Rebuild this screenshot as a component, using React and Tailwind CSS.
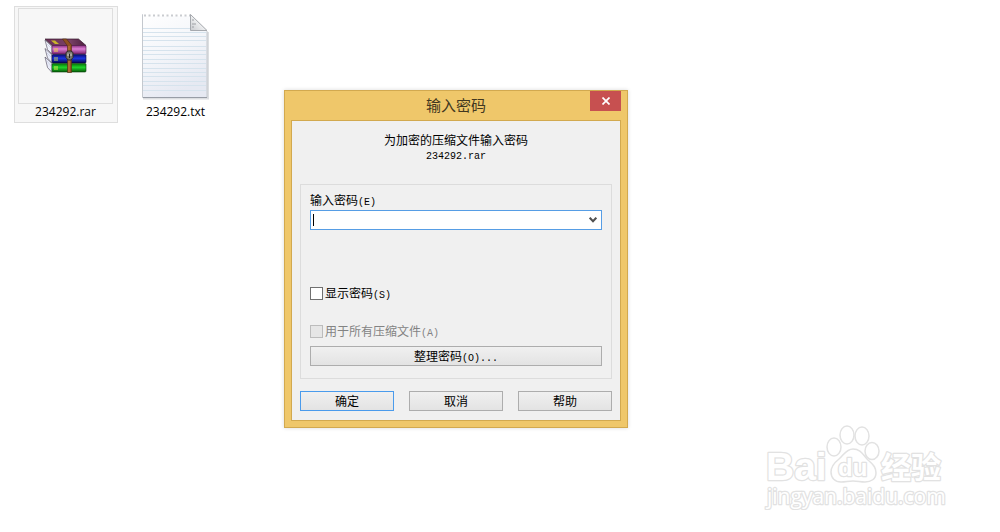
import React, { useState } from 'react';
import clsx from 'clsx';

const RarIcon = () => (
  <svg viewBox="0 0 43 36" className="h-9 w-[43px]" aria-hidden="true">
    <defs>
      <linearGradient id="cover" x1="0" y1="0" x2="1" y2="0">
        <stop offset="0" stopColor="#6b3158" />
        <stop offset="0.6" stopColor="#7a4166" />
        <stop offset="1" stopColor="#4c1f3f" />
      </linearGradient>
      <linearGradient id="purple" x1="0" y1="0" x2="0" y2="1">
        <stop offset="0" stopColor="#8a2f80" />
        <stop offset="0.4" stopColor="#dc7fd3" />
        <stop offset="1" stopColor="#7b2270" />
      </linearGradient>
      <linearGradient id="blue" x1="0" y1="0" x2="0" y2="1">
        <stop offset="0" stopColor="#0a0a70" />
        <stop offset="0.45" stopColor="#1c35e0" />
        <stop offset="1" stopColor="#060650" />
      </linearGradient>
      <linearGradient id="green" x1="0" y1="0" x2="0" y2="1">
        <stop offset="0" stopColor="#067006" />
        <stop offset="0.45" stopColor="#1fd42a" />
        <stop offset="1" stopColor="#055a08" />
      </linearGradient>
    </defs>

    {/* page edges */}
    <path d="M1 2 8 8.5V16L3.5 11.5Z" fill="#eef0fa" stroke="#4a4357" strokeWidth="0.6" />
    <path d="M1 10.5 8 17V25L3.5 20Z" fill="#e8ebf8" stroke="#4a4357" strokeWidth="0.6" />
    <path d="M1 19 8 25.5V34.5L3.5 29.5Z" fill="#e8ebf8" stroke="#4a4357" strokeWidth="0.6" />
    <path d="M3 6 7 10M3 15 7 19M3 23 7 28" stroke="#c3c8dc" strokeWidth="0.6" />

    {/* books */}
    <path d="M1 1H34.5L42 7.5H8Z" fill="url(#cover)" stroke="#35192d" strokeWidth="0.7" />
    <rect x="8" y="7.5" width="34" height="8.5" rx="1" fill="url(#purple)" stroke="#4f1849" strokeWidth="0.6" />
    <rect x="8" y="16.5" width="34" height="8.5" rx="1" fill="url(#blue)" stroke="#04043a" strokeWidth="0.6" />
    <rect x="8" y="25.5" width="34" height="8.5" rx="1" fill="url(#green)" stroke="#063f08" strokeWidth="0.6" />

    {/* gold marks */}
    <path d="M7 2.5H11L15 6H11Z" fill="#c9b42a" />
    <path d="M11 10V14M13 10V14" stroke="#efd24a" strokeWidth="1" />
    <path d="M11 19V23M13 19V23" stroke="#c8cf62" strokeWidth="1" />
    <path d="M11 28V32M13 28V32" stroke="#d8ee4a" strokeWidth="1" />

    {/* belt */}
    <path d="M18.5 1H22.5L27.5 7V34.5H23.5V8Z" fill="#915021" stroke="#4f2b12" strokeWidth="0.6" />
    <path d="M25 8V34" stroke="#c58347" strokeWidth="1" />
    <path d="M22 14.5 24 13H27L29 14.5V19.5L27 22H24L22 19.5Z" fill="#77756e" stroke="#2e2b28" strokeWidth="1" />
    <path d="M24 15.5V18M27 15.5V18" stroke="#d7d7cf" strokeWidth="1" />
    <path d="M25.5 16V20" stroke="#252321" strokeWidth="1" />
  </svg>
);

const rules = [16, 20, 24, 28, 34, 38, 42, 47, 51, 56, 60, 64, 69, 73, 78];

const TxtIcon = () => (
  <svg viewBox="0 0 68 88" className="h-[88px] w-[68px]" aria-hidden="true">
    <defs>
      <linearGradient id="paper" x1="0" y1="0" x2="0.4" y2="1">
        <stop offset="0" stopColor="#ffffff" />
        <stop offset="0.5" stopColor="#f4f6fa" />
        <stop offset="1" stopColor="#e6e9f2" />
      </linearGradient>
      <linearGradient id="fold" x1="0" y1="1" x2="1" y2="0">
        <stop offset="0" stopColor="#c9cbcf" />
        <stop offset="0.6" stopColor="#f6f7f8" />
        <stop offset="1" stopColor="#b9bcc0" />
      </linearGradient>
    </defs>
    <path d="M1 86.5H66V20" fill="none" stroke="#dcdee1" strokeWidth="2" />
    <path d="M0.5 2.5H48L65 19V85.5H0.5Z" fill="url(#paper)" stroke="#c4c8ce" strokeWidth="1" />
    <path d="M1 85.5H65" stroke="#989da6" strokeWidth="1" />
    {rules.map((y) => (
      <path key={y} d={`M1 ${y + 0.5}H${y < 20 ? 48 : 64}`} stroke="#d6e3ed" strokeWidth="1" />
    ))}
    <path d="M1 3H48" stroke="#fff" strokeWidth="2" />
    <path d="M2 3.5H48" stroke="#c9ccd0" strokeWidth="2" strokeDasharray="2 2.5" />
    <path d="M48.5 2.5V18.5H65Z" fill="url(#fold)" stroke="#a6a9ae" strokeWidth="1" />
    <path d="M50 8H52M50 12H54M50 15H52" stroke="#9da0a5" strokeWidth="1" />
  </svg>
);

const Watermark = () => (
  <svg viewBox="0 0 184 88" className="h-[88px] w-[184px]" role="img" aria-label="Baidu 经验">
    <g fill="#fff" stroke="#e2e2e2" strokeWidth="1.5">
      <ellipse cx="71" cy="25" rx="7" ry="9" />
      <ellipse cx="84" cy="13" rx="7" ry="9" />
      <ellipse cx="99" cy="14" rx="7" ry="9" />
      <ellipse cx="109" cy="29" rx="7" ry="8.5" />
      <path d="M90 27C98 27 100 33 105 38C111 43 113 46 113 51C113 57 108 60 102 60C97 60 95 59 90 59C85 59 83 60 78 60C72 60 68 56 68 50C68 45 71 41 76 37C81 33 83 27 90 27Z" />
      <g strokeWidth="2.5" paintOrder="stroke" strokeLinejoin="round">
        <text x="3" y="58" fontSize="39" fontWeight="700" fontFamily="'Liberation Sans', sans-serif">Bai</text>
        <text x="75" y="54" fontSize="24" fontWeight="700" fontFamily="'Liberation Sans', sans-serif">du</text>
        <text x="118" y="56" fontSize="30" fontWeight="700" fontFamily="'Liberation Sans', 'Noto Sans CJK SC', sans-serif">经验</text>
        <text x="4" y="82" fontSize="21" fontFamily="'Open Sans', sans-serif">jingyan.baidu.com</text>
      </g>
    </g>
  </svg>
);

const FileItem = ({ name, selected, children }) => (
  <button
    type="button"
    className={clsx(
      'flex w-[104px] flex-col items-center border pr-1 pl-[3px] pt-px pb-0.5 text-xs text-black',
      selected ? 'border-[#dedede] bg-[#f7f7f7]' : 'border-transparent'
    )}
  >
    <span
      className={clsx(
        'flex h-24 w-full items-center justify-center border',
        selected ? 'border-[#dedede]' : 'border-transparent'
      )}
    >
      {children}
    </span>
    <span className="leading-4">{name}</span>
  </button>
);

// Latin characters are half the width of the Chinese ones
const Half = ({ children }) => (
  <span className="font-['Liberation_Mono',monospace] text-[10px] leading-none">{children}</span>
);

const DialogButton = ({ primary, className, children }) => (
  <button
    type="button"
    className={clsx(
      'h-5 border bg-linear-to-b from-[#f0f0f0] to-[#e3e3e3] leading-4 text-black',
      primary ? 'border-[#4a9bec]' : 'border-[#adadad]',
      className
    )}
  >
    {children}
  </button>
);

const PasswordDialog = () => {
  const [password, setPassword] = useState('');
  const [show, setShow] = useState(false);

  return (
    <section
      role="dialog"
      aria-labelledby="dialog-title"
      className="w-[344px] border border-[#d2a94f] bg-[#efc76a] px-1.5 pb-1.5 shadow-[0_0_4px_rgba(0,0,0,0.15)]"
    >
      <header className="relative flex h-[29px] items-center justify-center pb-0.5">
        <h1 id="dialog-title" className="text-[15px] leading-5 text-[#42371f]">输入密码</h1>
        <button
          type="button"
          aria-label="关闭"
          className="absolute top-0 right-0 flex h-5 w-[31px] items-center justify-center bg-[#c75050]"
        >
          <svg viewBox="0 0 8 8" className="size-2" aria-hidden="true">
            <path d="M0.5 0.5 7.5 7.5M7.5 0.5 0.5 7.5" stroke="#fff" strokeWidth="1.7" />
          </svg>
        </button>
      </header>

      <form
        className="border border-[#d2a94f] bg-[#f0f0f0] px-2 pt-3 pb-[9px] font-['Noto_Sans_CJK_SC',sans-serif] text-xs text-black"
        onSubmit={(e) => e.preventDefault()}
      >
        <p className="text-center leading-[14px]">
          为加密的压缩文件输入密码
          <br />
          <Half>234292.rar</Half>
        </p>

        <div className="mt-[22px] border border-[#dcdcdc] px-[9px] pt-[5px] pb-3">
          <label htmlFor="password" className="block leading-5">
            输入密码<Half>(E)</Half>
          </label>
          <div className="relative flex h-5 items-center border border-[#569de5] bg-white">
            <input
              id="password"
              type={show ? 'text' : 'password'}
              value={password}
              onChange={(e) => setPassword(e.target.value)}
              className="h-full min-w-0 flex-1 px-0.5 outline-none"
            />
            {password === '' && <span className="absolute left-0.5 h-3 w-px bg-black" />}
            <button type="button" aria-label="历史密码" className="flex h-full w-4 items-center justify-center">
              <svg viewBox="0 0 8 6" className="h-1.5 w-2" aria-hidden="true">
                <path d="M0.7 0.7 4 4.3 7.3 0.7" fill="none" stroke="#505050" strokeWidth="2" />
              </svg>
            </button>
          </div>

          <label className="mt-[54px] flex items-center gap-0.5 leading-[18px]">
            <input
              type="checkbox"
              checked={show}
              onChange={(e) => setShow(e.target.checked)}
              className="size-[13px] appearance-none border border-[#707070] bg-white checked:bg-[#569de5]"
            />
            <span>显示密码<Half>(S)</Half></span>
          </label>
          <label className="mt-5 flex items-center gap-0.5 leading-[18px] text-[#838383]">
            <input
              type="checkbox"
              disabled
              className="size-[13px] appearance-none border border-[#bcbcbc] bg-[#e6e6e6]"
            />
            <span>用于所有压缩文件<Half>(A)</Half></span>
          </label>
          <DialogButton className="mt-1.5 block w-full">
            整理密码<Half>(O)...</Half>
          </DialogButton>
        </div>

        <div className="mt-3 grid grid-cols-3 gap-[15px]">
          <DialogButton primary>确定</DialogButton>
          <DialogButton>取消</DialogButton>
          <DialogButton>帮助</DialogButton>
        </div>
      </form>
    </section>
  );
};

const App = () => {
  return (
    <main className="relative min-h-screen overflow-hidden bg-white font-['Open_Sans','Noto_Sans_CJK_SC',sans-serif]">
      {/* Desktop files */}
      <div className="flex gap-1.5 px-3.5 pt-1.5">
        <FileItem name="234292.rar" selected>
          <RarIcon />
        </FileItem>
        <FileItem name="234292.txt">
          <TxtIcon />
        </FileItem>
      </div>

      <div className="absolute top-[90px] left-[284px]">
        <PasswordDialog />
      </div>

      <div className="absolute top-[422px] right-[53px]">
        <Watermark />
      </div>
    </main>
  );
};

export default App;
